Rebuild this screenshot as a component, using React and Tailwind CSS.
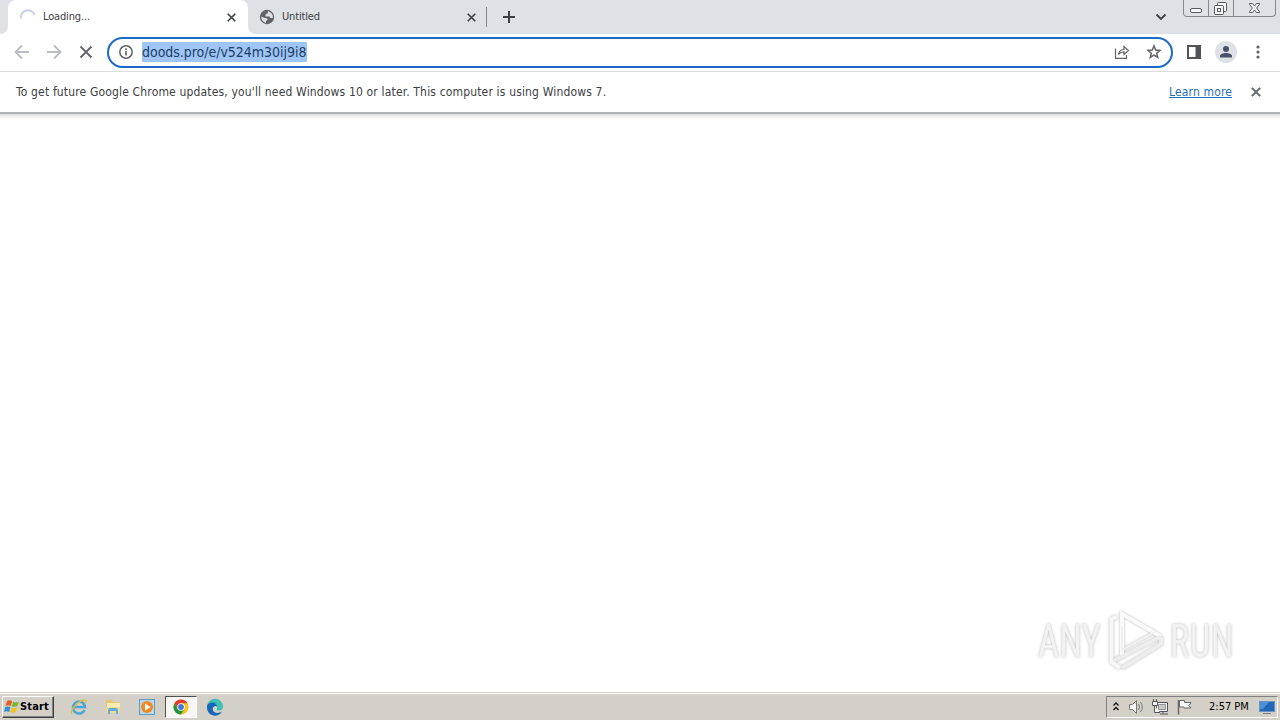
import { clsx } from 'clsx';

function CloseIcon({ size = 9, color = '#3c4043', width = 1.8 }) {
  return (
    <svg width={size} height={size} viewBox="0 0 10 10" fill="none" stroke={color} strokeWidth={width}>
      <path d="M0.8 0.8 9.2 9.2M9.2 0.8 0.8 9.2" />
    </svg>
  );
}

function WindowControls() {
  return (
    <div className="absolute right-[4px] top-0 flex h-[17px] w-[93px] rounded-b-[4px] border border-t-0 border-[#85898f]">
      <svg width="91" height="16" viewBox="0 0 91 16" fill="none" stroke="#555a61">
        <path d="M24.5 0V16M49.5 0V16" stroke="#85898f" />
        <rect x="6.5" y="8.5" width="11" height="4" rx="1.5" fill="#f4f5f7" />
        <rect x="33.5" y="2.5" width="9" height="9" rx="1" fill="#f4f5f7" />
        <rect x="30.5" y="5.5" width="9" height="9" rx="1" fill="#f4f5f7" />
        <rect x="33.5" y="8.5" width="3" height="3" />
        <path d="M65.5 3.5h3l2 2.5 2-2.5h3v1l-3 3.500 3 3.500v1h-3l-2-2.500-2 2.500h-3v-1l3-3.500-3-3.500z" fill="#f4f5f7" />
      </svg>
    </div>
  );
}

function TabStrip() {
  return (
    <div className="relative flex h-[34px] shrink-0 bg-[#dee1e6] text-[11px] text-[#3c4043]">
      <div className="h-full w-[8px] bg-white">
        <div className="h-full w-full rounded-br-[8px] bg-[#dee1e6]" />
      </div>
      {/* Active tab */}
      <div className="flex w-[240px] items-center rounded-t-[8px] bg-white pl-[12px] pr-[12px]">
        <svg width="16" height="16" viewBox="0 0 16 16" fill="none" stroke="#c9cfe8" strokeWidth="2">
          <path d="M1 9.500A7 7 0 0 1 14.500 6" />
        </svg>
        <span className="ml-[7px] tracking-[-0.15px]">Loading...</span>
        <span className="ml-auto"><CloseIcon /></span>
      </div>
      {/* Background tab */}
      <div className="w-[239px] bg-white">
        <div className="flex h-full items-center rounded-bl-[8px] bg-[#dee1e6] pl-[11px] pr-[11px]">
          <svg width="16" height="16" viewBox="0 0 16 16">
            <circle cx="8" cy="8" r="7.200" fill="#5f6368" />
            <path d="M9 2.200 8.500 4.500 6.500 5.500V7.500H10.500L11.500 9H13.800C14.300 6 12.500 3 9 2.200zM2.300 7.500C2 10.500 4 13.200 7 13.700V12L8.500 11V9.500L5.500 9z" fill="#dee1e6" />
          </svg>
          <span className="ml-[7px] tracking-[-0.15px]">Untitled</span>
          <span className="ml-auto"><CloseIcon /></span>
        </div>
      </div>
      <div className="flex items-center">
        <div className="-ml-px h-[20px] w-px bg-[#85898f]" />
        <svg className="ml-[15px]" width="14" height="14" viewBox="0 0 14 14" stroke="#3c4043" strokeWidth="2">
          <path d="M1 7H13M7 1V13" />
        </svg>
      </div>
      <svg className="absolute left-[1155px] top-[13px]" width="12" height="8" viewBox="0 0 12 8" fill="none" stroke="#3c4043" strokeWidth="1.800">
        <path d="M1.500 1.500 6 6 10.500 1.500" />
      </svg>
      <WindowControls />
    </div>
  );
}

function Toolbar() {
  return (
    <div className="flex h-[38px] shrink-0 items-center border-b border-[#dadce0] bg-white pb-px pl-[14px]">
      <svg width="80" height="16" viewBox="0 0 80 16" fill="none" strokeWidth="1.800">
        <path d="M15 8H2M8 1.500 1.500 8 8 14.500M33 8H46M40 1.500 46.500 8 40 14.500" stroke="#bbbdc0" />
        <path d="M66.500 2.500 77.500 13.500M77.500 2.500 66.500 13.500" stroke="#5f6368" />
      </svg>
      <div className="mt-px ml-[13px] flex h-[31px] w-[1066px] items-center rounded-full border-2 border-[#1b6ac9] pb-px pl-[9px] pr-[9px]">
        <svg width="16" height="16" viewBox="0 0 16 16" fill="none" stroke="#5f6368" strokeWidth="1.500">
          <circle cx="8" cy="8" r="6.200" />
          <path d="M8 7V11.500M8 4.300V6" strokeWidth="1.600" />
        </svg>
        <span className="ml-[8px] h-[20px] w-[165px] whitespace-nowrap bg-[#9fc5f5] text-[14px] leading-[21px] tracking-[-0.03px] text-[#1c3d66]">
          doods.pro/e/v524m30ij9i8
        </span>
        <svg className="ml-auto" width="16" height="16" viewBox="0 0 16 16" fill="none" stroke="#5f6368" strokeWidth="1.200">
          <path d="M1.500 4.500V14.300H12.500V11M4.500 10.500C5 7 7 5.500 10 5.500V2.500L14.500 6.500 10 10.500V7.800C7.500 7.800 6 8.500 4.500 10.500z" />
        </svg>
        <svg className="ml-[16px]" width="16" height="16" viewBox="0 0 16 16" fill="none" stroke="#5f6368" strokeWidth="1.500">
          <path d="M8 2 9.700 6 14 6.400 10.700 9.200 11.700 13.400 8 11.200 4.300 13.400 5.300 9.200 2 6.400 6.300 6z" />
        </svg>
      </div>
      <svg className="ml-[14px]" width="14" height="14" viewBox="0 0 14 14" fill="none" stroke="#4f5358" strokeWidth="2">
        <path d="M1 1H13V13H1z" />
        <path d="M8.500 1H13V13H8.500z" fill="#4f5358" stroke="none" />
      </svg>
      <svg className="ml-[14px]" width="22" height="22" viewBox="0 0 22 22">
        <circle cx="11" cy="11" r="11" fill="#dee1e6" />
        <circle cx="11" cy="8" r="3" fill="#475269" />
        <path d="M5 16.500V15c0-2 3.500-3 6-3s6 1 6 3v1.500z" fill="#475269" />
      </svg>
      <svg className="ml-[19px]" width="4" height="14" viewBox="0 0 4 14" fill="#5f6368">
        <circle cx="2" cy="2" r="1.600" />
        <circle cx="2" cy="7" r="1.600" />
        <circle cx="2" cy="12" r="1.600" />
      </svg>
    </div>
  );
}

function UpdateBar() {
  return (
    <div className="shrink-0">
      <div className="flex h-[40px] items-center bg-white pl-[16px] pr-[19px] text-[12px] text-[#3c4043]">
        <span className="whitespace-nowrap tracking-[0.162px]">
          To get future Google Chrome updates, you'll need Windows 10 or later. This computer is using Windows 7.
        </span>
        <span className="ml-auto mr-[19px] whitespace-nowrap tracking-[0.14px] text-[#1f6fc0] underline">Learn more</span>
        <CloseIcon size={10} color="#5f6368" width={1.9} />
      </div>
      <div className="h-[2px] bg-[#b1b3b5]" />
      <div className="h-[5px] bg-gradient-to-b from-[#dedede] to-white" />
    </div>
  );
}

function Watermark() {
  return (
    <div className="absolute left-[1038px] top-[608px] flex h-[66px] items-center text-[46px] leading-none text-[#f2f2f2] [filter:drop-shadow(0_0_1.5px_#bbbbbb)]">
      <span className="w-[70px] origin-left scale-x-[0.8] font-['Roboto']">ANY</span>
      <svg width="56" height="62" viewBox="0 0 56 62" fill="none" strokeWidth="4">
        <path d="M9 6.500 3.500 9V52L12 58" stroke="#f7f7f7" />
        <path d="M14 46V4L53 26.500" stroke="#fafafa" />
        <path d="M14 16V40L47 22" stroke="#f0f0f0" strokeWidth="2" />
        <path d="M5 51 53 26.500M14 58 53 34V27" stroke="#ededed" />
      </svg>
      <span className="ml-[5px] w-[64px] origin-left scale-x-[0.8] pl-[1px] font-['Roboto'] tracking-[0.5px]">RUN</span>
    </div>
  );
}

function IeIcon() {
  return (
    <svg width="18" height="18" viewBox="0 0 18 18" fill="none">
      <path d="M14.500 12A6 6 0 1 1 15 9H4" stroke="#4ba6dc" strokeWidth="2.500" />
      <path d="M2 16C-1 13 8 3 14 2c3-.3 2.500 2 1.500 3.500" stroke="#e8bb3c" strokeWidth="1.300" />
    </svg>
  );
}

function ExplorerIcon() {
  return (
    <svg width="18" height="18" viewBox="0 0 18 18">
      <path d="M2 2h6l1 2h7v9H2z" fill="#e5c873" />
      <path d="M3 5h13v4H3z" fill="#f9edb2" />
      <path d="M2 9h14v6H2z" fill="#eedc94" />
      <path d="M4 16v-4q0-2 2-2h6q2 0 2 2v4h-2v-3H6v3z" fill="#65aadc" />
    </svg>
  );
}

function PlayerIcon() {
  return (
    <svg width="18" height="18" viewBox="0 0 18 18">
      <rect x="1.500" y="1.500" width="15" height="15" fill="#b9d9ef" stroke="#5b9bc6" />
      <circle cx="9" cy="9" r="6" fill="#ef8a20" />
      <path d="M7 5.500 12.500 9 7 12.500z" fill="#fff" />
    </svg>
  );
}

function ChromeIcon() {
  return (
    <svg width="16" height="16" viewBox="0 0 16 16">
      <circle cx="8" cy="8" r="7.500" fill="#fbc116" />
      <path d="M1.500 4.250A7.500 7.500 0 0 1 14.500 4.250H8L4.750 9.900z" fill="#e33b2e" />
      <path d="M1.500 4.250A7.500 7.500 0 0 0 8 15.500L11.250 9.900H4.750z" fill="#229342" />
      <circle cx="8" cy="8" r="3.750" fill="#fff" />
      <circle cx="8" cy="8" r="2.900" fill="#3f78d8" />
    </svg>
  );
}

function EdgeIcon() {
  return (
    <svg width="18" height="18" viewBox="0 0 18 18">
      <path d="M1 9a8 8 0 0 1 16-.5c0 3-2 4-4 4-3 0-2-1.500-2-2.500C11 7 7 5 1 9z" fill="#3cc0b4" />
      <path d="M1 9c0-3 3-4.500 5.500-4.500S11 6.500 11 8.500C8.500 7 6 9.500 7 12.500c1 2.500 5 3.500 9 1A8 8 0 0 1 1 9z" fill="#1667b5" />
    </svg>
  );
}

const apps = [
  { name: 'ie', Icon: IeIcon },
  { name: 'explorer', Icon: ExplorerIcon },
  { name: 'player', Icon: PlayerIcon },
  { name: 'chrome', Icon: ChromeIcon, active: true },
  { name: 'edge', Icon: EdgeIcon },
];

function Taskbar() {
  return (
    <div className="flex h-[28px] shrink-0 items-center border-t border-[#d4d0c8] bg-[#d4d0c8] pt-px shadow-[inset_0_1px_0_#ffffff]">
      <div className="ml-[2px] flex h-[22px] w-[52px] items-center border border-b-[#404040] border-l-white border-r-[#404040] border-t-white pl-px shadow-[inset_-1px_-1px_0_#808080]">
        <svg width="16" height="16" viewBox="0 0 16 16">
          <path d="M3 2q3-1.500 5 .3L6.800 7Q4.500 5.500 1.500 6.800z" fill="#e85b24" />
          <path d="M9 2.800q3 1.500 6-.3L13.500 7Q11 8.500 7.800 7.300z" fill="#76b72d" />
          <path d="M1.200 8q3-1.300 5.200.2L5.200 13Q3 11.500 0 12.800z" fill="#3290d4" />
          <path d="M7.500 8.500q3 1.500 5.700 0L12 13Q9 14.500 6.200 13z" fill="#f4bd25" />
        </svg>
        <span className="text-[11px] font-bold tracking-[0.15px] text-black">Start</span>
      </div>
      <div className="ml-[9px] flex items-center gap-[2px]">
        {apps.map(({ name, Icon, active }) => (
          <div
            key={name}
            className={clsx(
              'flex h-[22px] w-[32px] items-center justify-center',
              active && 'border border-b-white border-l-[#505050] border-r-white border-t-[#505050] bg-[#f7f6f4]'
            )}
          >
            <Icon />
          </div>
        ))}
      </div>
      <div className="ml-auto mr-[2px] flex h-[22px] w-[172px] items-center border border-b-white border-l-[#808080] border-r-white border-t-[#808080] pl-[6px]">
        <svg width="6" height="10" viewBox="0 0 6 10" fill="none" stroke="#111" strokeWidth="1.300">
          <path d="M0.500 3.500 3 1 5.500 3.500M0.500 8 3 5.500 5.500 8" />
        </svg>
        <svg className="ml-[9px]" width="18" height="16" viewBox="0 0 18 16" fill="#f8f8f8" stroke="#77797b">
          <path d="M1.500 5.500h3l4-4v13l-4-4h-3z" />
          <path d="M10.500 5q2 3 0 6M12.500 3q3.500 5 0 10" fill="none" />
        </svg>
        <svg className="ml-[6px]" width="18" height="16" viewBox="0 0 18 16" fill="#f4f4f4" stroke="#55585b">
          <path d="M4.500 3.500h11v9h-11zM8 15h8M11 12.500v2" />
          <path d="M6.500 5.500h7v5h-7z" fill="#c9c9c7" stroke="#909294" />
          <path d="M0.500 2.500h5v4h-5zM1.500 0v2M4.500 0v2M2.500 7v6.500H8" />
        </svg>
        <svg className="ml-[6px]" width="18" height="16" viewBox="0 0 18 16" fill="#f8f8f8" stroke="#66696c">
          <path d="M2.500 1V15.500" strokeWidth="1.500" />
          <path d="M3.500 1.500h5v2h6.500l-2 3 2 2.500H8V8H3.500z" />
        </svg>
        <span className="ml-[15px] w-[41px] whitespace-nowrap text-[11px] text-black">2:57 PM</span>
        <svg className="ml-[9px]" width="16" height="14" viewBox="0 0 16 14">
          <rect x="0.500" y="1.500" width="15" height="10" fill="#2466b5" stroke="#6595c8" />
          <path d="M1 2H10L4 9H1z" fill="#4c91d8" />
          <path d="M4 13.500H12" stroke="#718399" />
        </svg>
      </div>
    </div>
  );
}

export default function App() {
  return (
    <div className="relative flex h-[720px] w-[1280px] flex-col overflow-hidden bg-white font-['DejaVu_Sans_Condensed','DejaVu_Sans',sans-serif] [font-stretch:condensed]">
      <TabStrip />
      <Toolbar />
      <UpdateBar />
      <main className="flex-1 bg-white" />
      <Taskbar />
      <Watermark />
    </div>
  );
}
